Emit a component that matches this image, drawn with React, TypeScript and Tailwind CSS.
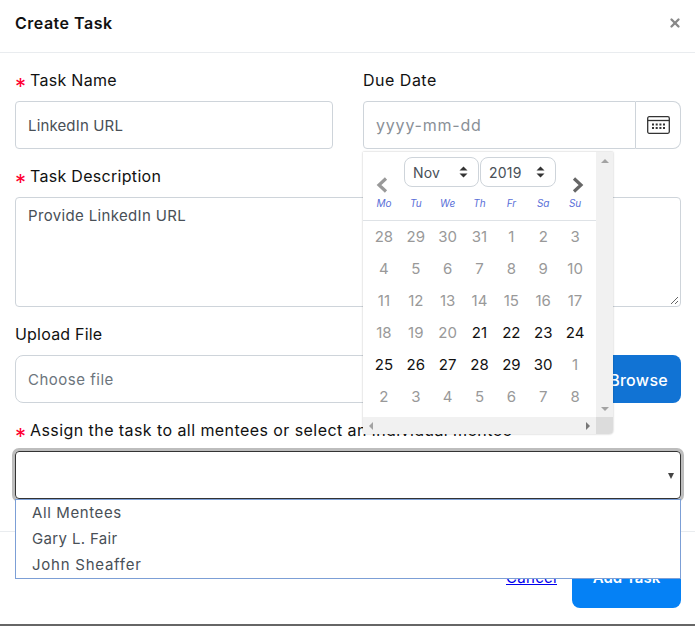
import { X } from 'lucide-react';

const font = { fontFamily: 'Inter' };

const weekdays = ['Mo', 'Tu', 'We', 'Th', 'Fr', 'Sa', 'Su'];
const days = [
  '28', '29', '30', '31', '1', '2', '3',
  '4', '5', '6', '7', '8', '9', '10',
  '11', '12', '13', '14', '15', '16', '17',
  '18', '19', '20', '21', '22', '23', '24',
  '25', '26', '27', '28', '29', '30', '1',
  '2', '3', '4', '5', '6', '7', '8',
];

function Star() {
  return <span className="absolute left-0 top-[5px] text-[22px] leading-[22px] tracking-normal text-[#ff0033]">*</span>;
}

function Label({ text, required, spacing = 'tracking-[0.3px]' }: { text: string; required?: boolean; spacing?: string }) {
  return (
    <label className={`relative block h-[21px] text-[16px] font-normal leading-[21px] text-[#111] whitespace-nowrap ${spacing} ${required ? 'pl-[15px]' : ''}`}>
      {required && <Star />}
      {text}
    </label>
  );
}

function Updown() {
  return (
    <svg width="9" height="12" viewBox="0 0 9 12" className="shrink-0">
      <path d="M4.5 0.5 L8.5 4.5 H0.5 Z M4.5 11.5 L0.5 7.5 H8.5 Z" fill="#333" />
    </svg>
  );
}

function MiniSelect({ value, width }: { value: string; width: string }) {
  return (
    <div className={`flex h-[30px] items-center justify-between rounded-lg border border-[#ced4da] pl-[8px] pr-[10px] text-[14px] tracking-[0.2px] text-[#495057] ${width}`}>
      {value}
      <Updown />
    </div>
  );
}

function CalendarIcon() {
  return (
    <svg width="23" height="18" viewBox="0 0 23 18" fill="none">
      <rect x="0.7" y="0.7" width="21.6" height="16.6" rx="1.5" stroke="#333" strokeWidth="1.3" />
      <path d="M0.7 4.5 H22.3" stroke="#333" strokeWidth="1.3" />
      <g fill="#333">
        {[6, 9.7, 13.4, 17].map((x) => (
          <g key={x}>
            <rect x={x - 1} y="7.5" width="2" height="2" />
            <rect x={x - 1} y="11" width="2" height="2" />
          </g>
        ))}
      </g>
    </svg>
  );
}

function DatePopup() {
  return (
    <div className="absolute left-[363px] top-[152px] z-10 flex h-[282px] w-[250px] flex-col rounded-b bg-white shadow-[0_0_2px_rgba(0,0,0,0.3)]">
      <div className="flex min-h-0 flex-1">
        <div className="w-[233px] overflow-hidden">
          <div className="flex h-[37px] items-start pt-[5px] pl-[12px]">
            <svg width="14" height="16" viewBox="0 0 14 16" className="mt-[20px] mr-[15px]">
              <path d="M11 1.5 L4 8 L11 14.5" stroke="#999" strokeWidth="3.2" fill="none" />
            </svg>
            <MiniSelect value="Nov" width="w-[75px]" />
            <div className="w-px" />
            <MiniSelect value="2019" width="w-[76px]" />
            <svg width="14" height="16" viewBox="0 0 14 16" className="mt-[20px] ml-[15px]">
              <path d="M3 1.5 L10 8 L3 14.5" stroke="#666" strokeWidth="3.2" fill="none" />
            </svg>
          </div>
          <div className="grid h-[32px] grid-cols-7 items-center border-b border-[#dee2e6] px-[5px] pb-[3px]">
            {weekdays.map((d) => (
              <span key={d} className="text-center text-[10px] italic text-[#5a6fd8]">{d}</span>
            ))}
          </div>
          <div className="grid grid-cols-7 px-[5px]">
            {days.map((d, i) => (
              <span
                key={i}
                className={`flex h-[32px] items-center justify-center text-[15px] ${i >= 24 && i <= 33 ? 'text-[#111]' : 'text-[#999]'}`}
              >
                {d}
              </span>
            ))}
          </div>
        </div>
        <div className="flex w-[17px] flex-col items-center justify-between bg-[#f1f1f1] pb-[6px] pt-[7px]">
          <span className="h-0 w-0 border-x-[4px] border-b-[4px] border-x-transparent border-b-[#a3a3a3]" />
          <span className="h-0 w-0 border-x-[4px] border-t-[4px] border-x-transparent border-t-[#a3a3a3]" />
        </div>
      </div>
      <div className="flex h-[17px] shrink-0">
        <div className="flex flex-1 items-center justify-between bg-[#f1f1f1] px-[6px]">
          <span className="h-0 w-0 border-y-[4px] border-r-[4px] border-y-transparent border-r-[#a3a3a3]" />
          <span className="h-0 w-0 border-y-[4px] border-l-[4px] border-y-transparent border-l-[#777]" />
        </div>
        <div className="w-[17px] rounded-br bg-[#dcdcdc]" />
      </div>
    </div>
  );
}

export default function App() {
  return (
    <div style={font} className="relative h-[626px] w-[695px] overflow-hidden bg-white">
      <div className="flex h-[53px] items-center justify-between border-b border-[#e9ecef] pb-[6px] pl-[15px] pr-[13px]">
        <h5 className="text-[16px] font-semibold tracking-[0.5px] text-[#111]">Create Task</h5>
        <X size={14} strokeWidth={4} className="text-[#888]" />
      </div>

      <div className="px-[14px] pt-[17px]">
        <div className="grid grid-cols-[318px_318px] gap-x-[30px] pl-px">
          <div>
            <Label text="Task Name" required />
            <div className="mt-[10px] flex h-[48px] items-center rounded border border-[#ced4da] px-[12px] pt-[2px] text-[15px] tracking-[0.15px] text-[#495057]">LinkedIn URL</div>
          </div>
          <div>
            <Label text="Due Date" spacing="tracking-[0.5px]" />
            <div className="mt-[10px] flex h-[48px]">
              <div className="flex flex-1 items-center rounded-l border border-[#ced4da] px-[12px] text-[16px] tracking-[0.8px] text-[#8a9097]">yyyy-mm-dd</div>
              <div className="flex w-[45px] items-center justify-center rounded-r-lg border border-l-0 border-[#ced4da]">
                <CalendarIcon />
              </div>
            </div>
          </div>
        </div>

        <div className="mt-[17px] pl-px">
          <Label text="Task Description" required />
          <div className="relative mt-[10px] h-[110px] w-[666px] rounded border border-[#ced4da] px-[12px] py-[7px] text-[15px] tracking-[0.35px] text-[#495057]">
            Provide LinkedIn URL
            <svg width="9" height="9" viewBox="0 0 9 9" className="absolute bottom-px right-px">
              <path d="M1 8 L8 1 M5 8 L8 5" stroke="#666" strokeWidth="1" />
            </svg>
          </div>
        </div>

        <div className="mt-[17px] pl-px">
          <Label text="Upload File" spacing="tracking-[0.2px]" />
          <div className="mt-[10px] flex h-[48px] w-[666px]">
            <div className="flex flex-1 items-center rounded-l-lg border border-[#ced4da] px-[12px] pt-[2px] text-[15px] tracking-[0.5px] text-[#6c757d]">Choose file</div>
            <div className="flex w-[120px] items-center justify-end rounded-r-lg bg-[#1173d4] pr-[13px] pt-px text-[16px] font-medium tracking-[0.3px] text-white">Browse</div>
          </div>
        </div>

        <div className="relative mt-[17px] pl-px">
          <Label text="Assign the task to all mentees or select an individual mentee" required spacing="tracking-[0.43px]" />
          <div className="mt-[10px] flex h-[48px] w-[666px] items-center justify-end rounded border border-[#333] pr-[6px] shadow-[0_0_0_3px_#bdbdbd]">
            <span className="mt-[2px] h-0 w-0 border-x-[3.5px] border-t-[6px] border-x-transparent border-t-[#444]" />
          </div>
          <div className="absolute left-px top-[79px] z-10 h-[80px] w-[666px] border border-[#7c9fd6] bg-white pl-[16px] text-[15px] leading-[26px] text-[#495057]">
            <div className="tracking-[0.6px]">All Mentees</div>
            <div className="tracking-[0.35px]">Gary L. Fair</div>
            <div className="tracking-[0.75px]">John Sheaffer</div>
          </div>
        </div>
      </div>

      <div className="mt-[32px] flex items-center justify-end gap-[15px] border-t border-[#e9ecef] pr-[14px] pt-[16px]">
        <span className="text-[15px] tracking-[0.3px] text-[#0000ee] underline">Cancel</span>
        <div className="flex h-[60px] w-[109px] items-center justify-center rounded-lg bg-[#0581f5] text-[15px] font-semibold text-white">Add Task</div>
      </div>

      <DatePopup />
      <div className="absolute inset-x-0 bottom-0 h-[2px] bg-[#666]" />
    </div>
  );
}
